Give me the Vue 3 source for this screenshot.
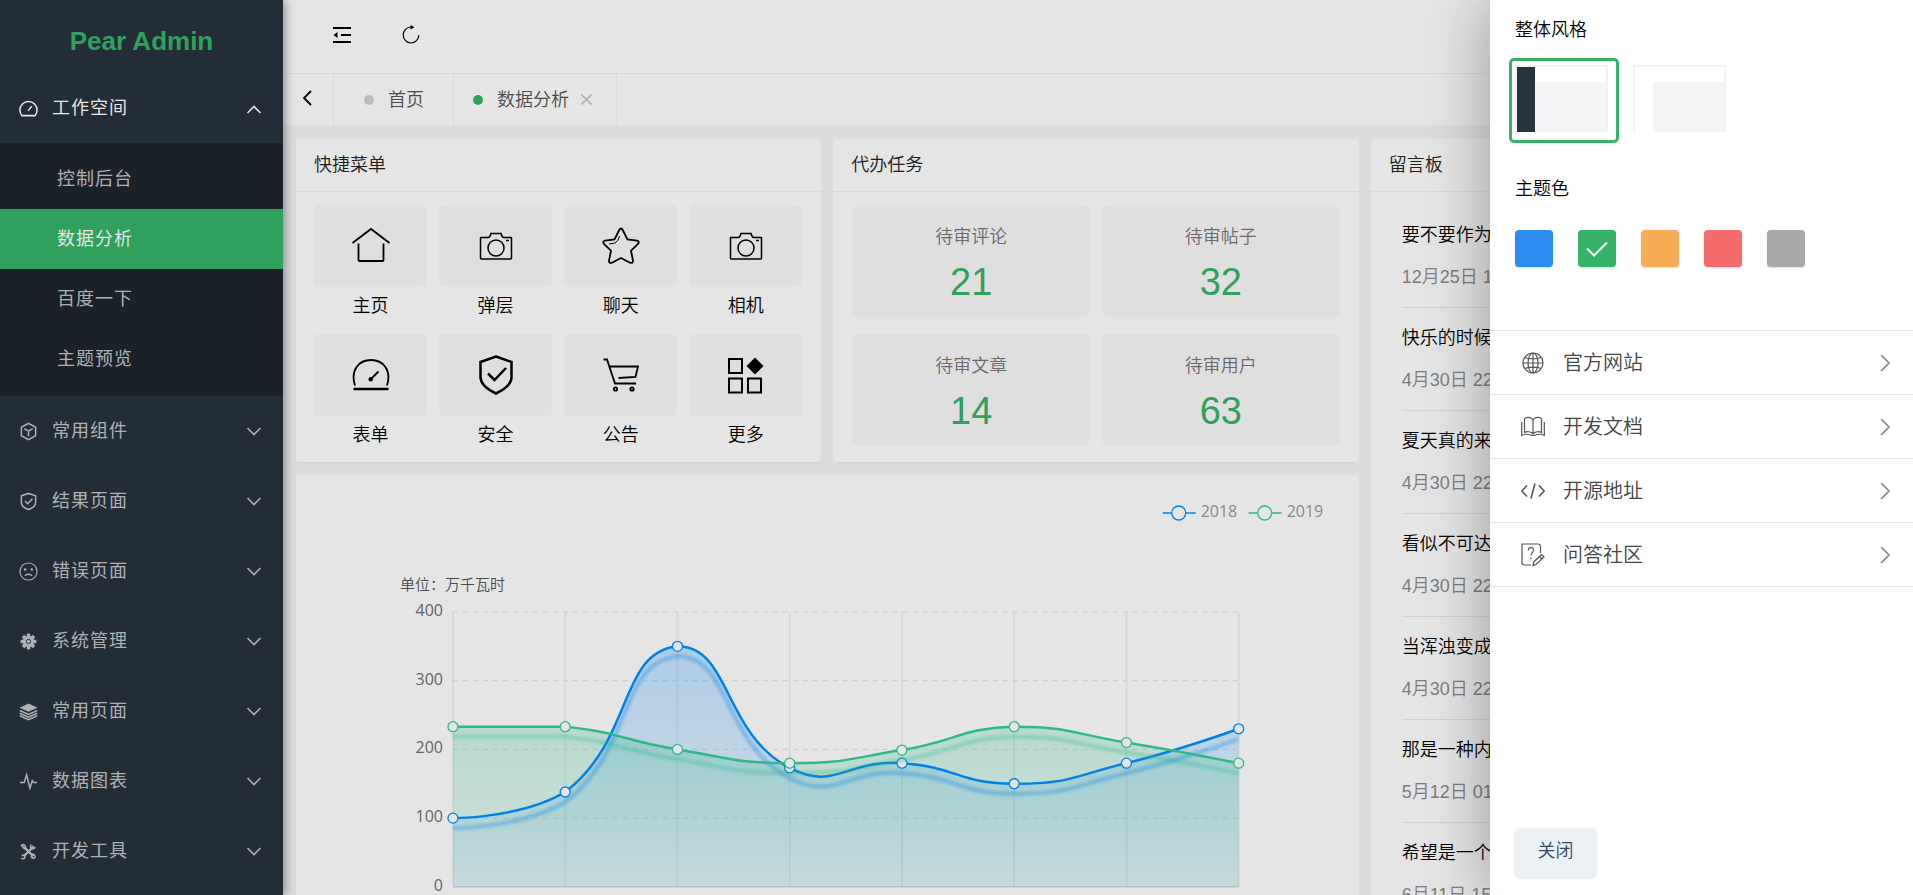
<script setup>
import { ref } from 'vue'

const subMenu = ['控制后台', '数据分析', '百度一下', '主题预览']
const activeSub = ref('数据分析')

const menus = [
  { name: '常用组件', icon: 'cube' },
  { name: '结果页面', icon: 'shield' },
  { name: '错误页面', icon: 'sad' },
  { name: '系统管理', icon: 'gear' },
  { name: '常用页面', icon: 'layers' },
  { name: '数据图表', icon: 'pulse' },
  { name: '开发工具', icon: 'tools' }
]

const quick = [
  { name: '主页', icon: 'home' },
  { name: '弹层', icon: 'camera' },
  { name: '聊天', icon: 'star' },
  { name: '相机', icon: 'camera' },
  { name: '表单', icon: 'gauge' },
  { name: '安全', icon: 'safe' },
  { name: '公告', icon: 'cart' },
  { name: '更多', icon: 'apps' }
]

const todos = [
  { name: '待审评论', value: 21 },
  { name: '待审帖子', value: 32 },
  { name: '待审文章', value: 14 },
  { name: '待审用户', value: 63 }
]

const messages = [
  { text: '要不要作为', date: '12月25日 1' },
  { text: '快乐的时候', date: '4月30日 22' },
  { text: '夏天真的来', date: '4月30日 22' },
  { text: '看似不可达', date: '4月30日 22' },
  { text: '当浑浊变成', date: '4月30日 22' },
  { text: '那是一种内', date: '5月12日 01' },
  { text: '希望是一个', date: '6月11日 15' }
]

const themes = ['blue', 'green', 'orange', 'red', 'gray']
const theme = ref('green')

const links = [
  { name: '官方网站', icon: 'globe' },
  { name: '开发文档', icon: 'book' },
  { name: '开源地址', icon: 'code' },
  { name: '问答社区', icon: 'question' }
]

/* Chart geometry */
const left = 157
const right = 943
const top = 137
const bottom = 412
const ticks = [400, 300, 200, 100, 0]
const yOf = v => bottom - (v / 400) * (bottom - top)
const xOf = i => left + (i * (right - left)) / 7

function build(values) {
  const pts = values.map((v, i) => [xOf(i), yOf(v)])
  const ys = pts.map(p => p[1])
  const lo = Math.min(...ys)
  const hi = Math.max(...ys)
  const clamp = p => [Math.min(right, Math.max(left, p[0])), Math.min(hi, Math.max(lo, p[1]))]
  const dist = (a, b) => Math.hypot(a[0] - b[0], a[1] - b[1])
  let d = `M${pts[0]}`
  let c0 = pts[0]
  for (let i = 1; i < pts.length; i++) {
    const p = pts[i]
    const prev = pts[i - 1]
    const next = pts[i + 1] || p
    const v = [next[0] - prev[0], next[1] - prev[1]]
    const a = dist(p, prev)
    const b = dist(p, next)
    const r = b / (a + b)
    const k = next === p ? 0 : 0.5
    const c1 = [p[0] - v[0] * k * (1 - r), p[1] - v[1] * k * (1 - r)]
    d += `C${clamp(c0)} ${clamp(c1)} ${p}`
    c0 = [p[0] + v[0] * k * r, p[1] + v[1] * k * r]
  }
  return { pts, line: d, area: `${d}L${right},${bottom}L${left},${bottom}Z` }
}

const series = [
  { id: 'blue', year: '2018', x: 867, ...build([100, 138, 350, 173, 180, 150, 180, 230]) },
  { id: 'green', year: '2019', x: 953, ...build([233, 233, 200, 180, 199, 233, 210, 180]) }
]

const gearTeeth = [0, 45, 90, 135, 180, 225, 270, 315]
</script>

<template>
  <div class="app">
    <aside class="side">
      <h1 class="brand">Pear Admin</h1>
      <nav>
        <button class="item open" type="button">
          <svg class="ico" viewBox="0 0 20 20"><path d="M3 17.500h14c1.300-1.600 2-3.600 2-5.800a9 9 0 0 0-18 0c0 2.200.7 4.200 2 5.800zM9.500 12.500l4-5" /></svg>
          <span>工作空间</span>
          <svg class="chev" viewBox="0 0 16 16"><path d="M1.500 13 8 6.500l6.500 6.500" /></svg>
        </button>
        <div class="sub">
          <a v-for="s in subMenu" :key="s" href="#" :class="{ on: s === activeSub }" @click.prevent="activeSub = s">{{ s }}</a>
        </div>
        <button v-for="m in menus" :key="m.name" class="item" type="button">
          <svg class="ico" viewBox="0 0 20 20">
            <path v-if="m.icon === 'cube'" d="M10 1.500 17.500 5.500v9L10 18.500 2.500 14.500v-9zM5.500 7 10 9.700 14.500 7M10 9.700V15" />
            <path v-else-if="m.icon === 'shield'" d="M10 1.500 17.500 4v7c0 3.500-4 6.200-7.500 7.500C6.500 17.200 2.500 14.500 2.500 11V4zM6.300 9.500l2.900 2.800 5-5.300" />
            <g v-else-if="m.icon === 'sad'">
              <circle class="ring" cx="10" cy="10" r="9" />
              <path d="M6.300 14.500c1.500-2 5.900-2 7.400 0" />
              <circle class="solid" cx="6.500" cy="8" r="1.300" />
              <circle class="solid" cx="13.500" cy="8" r="1.300" />
            </g>
            <g v-else-if="m.icon === 'gear'">
              <rect v-for="t in gearTeeth" :key="t" class="fill" x="8.200" y="1.700" width="3.600" height="5" :transform="`rotate(${t} 10 10)`" />
              <circle class="fill" cx="10" cy="10" r="6" />
              <circle class="hole" cx="10" cy="10" r="2.300" />
            </g>
            <g v-else-if="m.icon === 'layers'">
              <path class="fill" d="M10 1.500 19.500 6 10 10.300.5 6z" />
              <path d="M.8 9 10 13.100 19.200 9M.8 11.800 10 15.900l9.200-4.100M.8 14.500 10 18.500l9.200-4" />
            </g>
            <path v-else-if="m.icon === 'pulse'" d="M1 11h4.500L8 3l3.500 14L14 9l1.500 2H19" />
            <g v-else>
              <path class="thick" d="m6 6 9 9M15.500 4.500 5 15" />
              <path d="M2.800 3.500 5 2.800l2 2.200-1.500 2zM13 2.800c-1.500 1.500-1 4 .5 4.500 1.500.5 3-.5 3.500-2M3 14.500c1.500-1.500 4 0 3 2.300-1 1.200-3 .7-3.500 0M13.500 13c2-1 4.500 2 3 3.500s-4 0-3.500-2" />
            </g>
          </svg>
          <span>{{ m.name }}</span>
          <svg class="chev" viewBox="0 0 16 16"><path d="M1.500 5 8 11.500 14.500 5" /></svg>
        </button>
      </nav>
    </aside>

    <div class="body">
      <header class="head">
        <button type="button" aria-label="收起菜单">
          <svg viewBox="0 0 20 20"><path class="bar" d="M1 3h18M9 10h10M1 17h18" /><path class="solid" d="M1.500 10 5.500 7v6z" /></svg>
        </button>
        <button type="button" aria-label="刷新">
          <svg viewBox="0 0 20 20"><path class="thin" d="M17.800 10a7.800 8 0 1 1-7.800-8h1" /><path class="solid" d="M9.500 0 13.500 2.300 9.500 4.500z" /></svg>
        </button>
      </header>
      <div class="tabs">
        <button class="prev" type="button" aria-label="向左">
          <svg viewBox="0 0 16 16"><path d="M12 1 5 8l7 7" /></svg>
        </button>
        <a class="tab first" href="#"><i class="dot"></i>首页</a>
        <a class="tab" href="#"><i class="dot on"></i>数据分析
          <svg viewBox="0 0 14 14"><path d="m1.500 1.500 11 11m0-11-11 11" /></svg>
        </a>
      </div>

      <main class="grid">
        <section class="card">
          <h2>快捷菜单</h2>
          <div class="quick">
            <a v-for="(q, i) in quick" :key="i" href="#">
              <span class="tile">
                <svg viewBox="0 0 40 40">
                  <path v-if="q.icon === 'home'" d="M1.500 17 20 3l18.500 14M7.500 17.500V34q0 1 1 1h23q1 0 1-1V17.500" />
                  <g v-else-if="q.icon === 'camera'" class="fine">
                    <path d="M5 11.500h7q2 0 3-4h10q1 4 3 4h7q.5 0 .5.500v20q0 1-1 1h-29q-1 0-1-1v-20q0-.500.500-.500zM30 14.500h3" />
                    <circle cx="20" cy="22" r="8" />
                  </g>
                  <g v-else-if="q.icon === 'star'">
                    <path d="M18 4.500q2-4 4 0l4.500 9 9.500 1.200q3 .8 1 3.300l-7 6.700 2 10q0 3-3 2L20 32l-9 4.700q-3 1-3-2l2-10L3 18q-2-2.500 1-3.300l9.500-1.200z" />
                    <path class="hair" d="M18.500 10q-1.500 6-4.500 7l-6 1" />
                  </g>
                  <g v-else-if="q.icon === 'gauge'">
                    <path d="M4 30.500C-1 15 8 5 20 5s21 10 16 25.500M20 24l7.500-7.500" />
                    <path class="bold" d="M2.500 34h35" />
                    <circle class="solid" cx="19.700" cy="24.300" r="2.200" />
                  </g>
                  <g v-else-if="q.icon === 'safe'" class="bold">
                    <path d="M20 1.500 35.500 7v15c0 8-8 13-15.500 16.500C12.500 35 4.500 30 4.500 22V7z" />
                    <path d="m12 18.500 6.500 6.500L30 13" />
                  </g>
                  <g v-else-if="q.icon === 'cart'">
                    <path d="M2.500 4.500h3.500l8 24h21M8 11.500h29L34.500 22l-17 1" />
                    <circle cx="14.500" cy="34" r="1.700" />
                    <circle cx="31" cy="34" r="1.700" />
                  </g>
                  <g v-else>
                    <path class="square" d="M3 4h13v14H3zM3 23.500h13v14H3zM22 23.500h13v14H22z" />
                    <path class="solid" d="m29 2.500 8.500 8.500L29 19.500 20.500 11z" />
                  </g>
                </svg>
              </span>
              <span class="label">{{ q.name }}</span>
            </a>
          </div>
        </section>

        <section class="card">
          <h2>代办任务</h2>
          <div class="todo">
            <a v-for="t in todos" :key="t.name" href="#">
              <span>{{ t.name }}</span>
              <strong>{{ t.value }}</strong>
            </a>
          </div>
        </section>

        <section class="card board">
          <h2>留言板</h2>
          <ul>
            <li v-for="(m, i) in messages" :key="i">
              <p>{{ m.text }}</p>
              <time>{{ m.date }}</time>
            </li>
          </ul>
        </section>

        <section class="card chart">
          <svg viewBox="0 0 1063 440" role="img" aria-label="单位：万千瓦时">
            <defs>
              <linearGradient id="fill-blue" x1="0" y1="0" x2="0" y2="1">
                <stop offset="0" stop-color="#0090ff" stop-opacity=".24" />
                <stop offset="1" stop-color="#0090ff" stop-opacity=".07" />
              </linearGradient>
              <linearGradient id="fill-green" x1="0" y1="0" x2="0" y2="1">
                <stop offset="0" stop-color="#34ce9a" stop-opacity=".25" />
                <stop offset="1" stop-color="#34ce9a" stop-opacity=".09" />
              </linearGradient>
              <filter id="glow" x="-5%" y="-30%" width="110%" height="170%">
                <feGaussianBlur stdDeviation="1.500" />
              </filter>
            </defs>
            <line v-for="i in 8" :key="'v' + i" class="vline" :x1="xOf(i - 1)" :x2="xOf(i - 1)" :y1="top" :y2="bottom" />
            <line v-for="t in ticks" :key="'h' + t" :class="t ? 'hline' : 'axis'" :x1="left" :x2="right" :y1="yOf(t)" :y2="yOf(t)" />
            <text v-for="t in ticks" :key="'t' + t" class="tick" :x="left - 10" :y="yOf(t) + 4">{{ t }}</text>
            <text class="unit" x="104" y="115">单位：万千瓦时</text>

            <path v-for="s in series" :key="'a' + s.id" class="area" :d="s.area" :fill="`url(#fill-${s.id})`" />
            <g v-for="s in series" :key="s.id" :class="s.id">
              <g transform="translate(0 10)"><path class="glow" :d="s.line" filter="url(#glow)" /></g>
              <path class="line" :d="s.line" />
              <circle v-for="(p, i) in s.pts" :key="i" :cx="p[0]" :cy="p[1]" r="5" />
              <path class="key" :d="`M${s.x} 38h33`" />
              <circle :cx="s.x + 16" cy="38" r="7" />
              <text class="year" :x="s.x + 38" y="42">{{ s.year }}</text>
            </g>
          </svg>
        </section>
      </main>
    </div>

    <div class="shade"></div>

    <aside class="drawer">
      <h3>整体风格</h3>
      <div class="styles">
        <button class="style on" type="button" aria-label="深色"><span class="thumb dark"><i></i><b></b></span></button>
        <button class="style" type="button" aria-label="浅色"><span class="thumb"><i></i><b></b></span></button>
      </div>
      <h3>主题色</h3>
      <div class="colors">
        <button v-for="c in themes" :key="c" type="button" :class="c" :aria-label="c" @click="theme = c">
          <svg v-if="c === theme" viewBox="0 0 24 24"><path d="m2 11.500 7 7L22 5.500" /></svg>
        </button>
      </div>
      <nav class="links">
        <a v-for="l in links" :key="l.name" href="#">
          <svg class="pic" viewBox="0 0 24 24">
            <g v-if="l.icon === 'globe'">
              <circle cx="12" cy="12" r="10" />
              <ellipse cx="12" cy="12" rx="5" ry="10" />
              <path d="M12 2v20M2 12h20M4 6.500c4 1.800 12 1.800 16 0M4 17.500c4-1.800 12-1.800 16 0" />
            </g>
            <path v-else-if="l.icon === 'book'" d="M12 5C10.500 2 5 1.500 3.500 4v13.500c2-1.500 7-1 8.500 1.500 1.500-2.500 6.500-3 8.500-1.500V4C19 1.500 13.500 2 12 5zM12 5v14M.7 7v13.500c3-1.500 7-1.500 9.800 0h3c2.700-1.500 6.700-1.500 9.800 0V7" />
            <path v-else-if="l.icon === 'code'" class="strong" d="M6 6.500.8 12 6 17.500M18 6.500l5.200 5.500-5.200 5.500M14 4.500 10 19.500" />
            <g v-else>
              <path d="M10 22H3.500Q1 22 1 19.500V1h16q2.500 0 2.500 2.500V10M7.300 7.500C7.500 3.500 13 4 12.500 7.500c-.300 2-2.500 2-2.500 5M10 14.500v1.700" />
              <path d="m12 22.500 1-4 7.500-7 2.500 2.500-8 7.500zM18.500 13.500 21 16M15 17l2-2" />
            </g>
          </svg>
          <span>{{ l.name }}</span>
          <svg class="go" viewBox="0 0 16 16"><path d="m4 0 8 8-8 8" /></svg>
        </a>
      </nav>
      <button class="close" type="button">关闭</button>
    </aside>
  </div>
</template>

<style>
body { overflow: hidden; }
</style>

<style scoped>
.app {
  position: relative;
  display: flex;
  height: 100vh;
  overflow: hidden;
  background: #f5f5f5;
  font-family: "Liberation Sans", "Noto Sans CJK SC", sans-serif;
  font-size: 18px;
  font-weight: 350;
  line-height: 24px;
  color: #000;
}
* { box-sizing: border-box; }
h1, h2, h3, p, ul { margin: 0; padding: 0; font-size: inherit; font-weight: inherit; }
ul { list-style: none; }
a { color: inherit; text-decoration: none; }
button { border: 0; padding: 0; background: none; font: inherit; color: inherit; cursor: pointer; }
svg { display: block; fill: none; stroke: currentColor; }
svg .solid { fill: currentColor; stroke: none; }

.side {
  position: relative;
  z-index: 1;
  flex: 0 0 283px;
  background: #28333e;
  color: #c2c5c8;
  box-shadow: 3px 0 8px rgba(0, 21, 41, .35);
}
.brand { height: 73px; padding-top: 10px; font-size: 26px; font-weight: 700; line-height: 62px; text-align: center; color: #36b368; }
.item { display: flex; align-items: center; gap: 14px; width: 100%; height: 70px; padding: 0 21px 0 19px; letter-spacing: 1px; text-align: left; font-weight: 400; }
.item span { flex: 1; }
.item.open { color: #fff; }
.ico { width: 19px; height: 19px; stroke-width: 1.6; }
.ico .ring { stroke-width: 1.200; }
.ico .fill { fill: currentColor; stroke: none; }
.ico .hole { stroke: #28333e; stroke-width: 1; }
.ico .thick { stroke-width: 2.500; }
.chev { width: 16px; height: 16px; stroke-width: 1.6; }
.sub { padding: 6px 0 7px; background: #1e252d; }
.sub a { display: block; height: 60px; padding-left: 57px; line-height: 60px; letter-spacing: 1px; font-weight: 400; }
.sub .on { background: #36b368; color: #fff; }

.body { flex: 1; min-width: 0; }
.head { display: flex; align-items: center; gap: 49px; height: 74px; padding: 0 0 4px 49px; background: #fff; border-bottom: 1px solid #f3f3f3; }
.head svg { width: 20px; height: 20px; }
.head .bar { stroke-width: 2; }
.head .thin { stroke-width: 1.200; }
.tabs { display: flex; height: 51px; background: #fff; color: #555; }
.prev { display: flex; align-items: center; width: 51px; padding: 0 0 4px 16px; border-right: 1px solid #f3f3f3; color: #000; }
.prev svg { width: 16px; height: 16px; stroke-width: 1.8; }
.tab { display: flex; align-items: center; padding: 0 23px 0 19px; border-right: 1px solid #f3f3f3; }
.tab.first { padding: 0 29px 0 30px; }
.tab svg { width: 13px; height: 13px; margin-left: 11px; color: #bbb; stroke-width: 1.5; }
.dot { width: 10px; height: 10px; margin-right: 14px; border-radius: 50%; background: #d2d2d2; }
.dot.on { background: #36b368; }

.grid { display: grid; grid-template-columns: repeat(3, 1fr); grid-template-rows: 323px auto; gap: 13px 12px; padding: 14px 17px 0 13px; }
.card { background: #fff; border-radius: 3px; box-shadow: 0 1px 2px rgba(0, 0, 0, .06); }
.card h2 { height: 53px; padding-left: 18px; line-height: 52px; border-bottom: 1px solid #f3f3f3; color: #222; }
.quick { display: grid; grid-template-columns: repeat(4, 1fr); gap: 0 12px; padding: 13px 19px 0 18px; }
.quick a { height: 129px; text-align: center; }
.tile { display: flex; align-items: center; justify-content: center; height: 82px; background: #f9f9f9; border-radius: 5px; }
.tile svg { width: 40px; height: 40px; stroke-width: 1.8; }
.tile .fine { stroke-width: 1.5; }
.tile .hair { stroke-width: 1; }
.tile .bold { stroke-width: 2.500; }
.tile .square { stroke-width: 2; }
.label { display: block; line-height: 38px; }
.todo { display: grid; grid-template-columns: 1fr 1fr; gap: 17px 12px; padding: 13px 19px 0; }
.todo a { display: flex; flex-direction: column; gap: 10px; height: 112px; padding-top: 20px; background: #f9f9f9; border-radius: 6px; text-align: center; color: #777; }
.todo strong { font-size: 38px; font-weight: 400; line-height: 46px; color: #36b368; }
.board { grid-row: span 2; }
.board ul { padding: 13px 31px 0; }
.board li { height: 103px; padding-top: 18px; border-bottom: 1px solid #eaeaea; white-space: nowrap; }
.board time { display: block; margin-top: 18px; color: #8c8c8c; }

.chart { grid-column: span 2; font-family: "Open Sans", "Noto Sans CJK SC", sans-serif; font-size: 16px; font-weight: 400; }
.chart svg { width: 100%; }
.chart text { stroke: none; fill: #6e7079; }
.chart .unit { fill: #555; font-size: 15px; font-weight: 350; }
.chart .tick { text-anchor: end; }
.chart .year { fill: #999; }
.area { stroke: none; }
.vline { stroke: #f1f1f1; stroke-width: 2; }
.hline { stroke: #e2e2e2; stroke-dasharray: 5 5; }
.axis { stroke: #ccc; }
.blue { color: #0090ff; }
.green { color: #34ce9a; }
.line { stroke-width: 2.500; }
.glow { stroke-width: 4; opacity: .35; }
.key { stroke-width: 1.500; }
.chart circle { fill: #fff; stroke-width: 1.300; }

.shade { position: absolute; inset: 0; z-index: 2; background: rgba(0, 0, 0, .1); }

.drawer {
  position: absolute;
  top: 0;
  right: 0;
  bottom: 0;
  z-index: 3;
  display: flex;
  flex-direction: column;
  width: 423px;
  padding-top: 15px;
  background: #fff;
  box-shadow: 1px 1px 60px rgba(0, 0, 0, .35);
}
.drawer h3 { padding-left: 25px; line-height: 30px; }
.styles { display: flex; gap: 8px; padding: 13px 19px 31px; }
.style { display: flex; width: 110px; height: 85px; padding: 4px 3px; border: 3px solid transparent; border-radius: 5px; }
.style.on { border-color: #36b368; }
.thumb { display: grid; grid-template: 15px 1fr / 18px 1fr; width: 93px; height: 67px; border: 2px solid #f2f2f2; border-bottom: 0; }
.thumb i { grid-row: span 2; }
.thumb.dark i { background: #28333e; }
.thumb b { grid-row: 2; grid-column: 2; background: #f3f5f7; }
.colors { display: flex; gap: 25px; padding: 26px 25px 63px; }
.colors button { display: flex; align-items: center; justify-content: center; width: 38px; height: 37px; border-radius: 4px; background: #a9a9a9; box-shadow: 0 1px 2px rgba(0, 0, 0, .15); }
.colors svg { width: 24px; height: 24px; color: #fff; stroke-width: 2; }
.colors .blue { background: #2d8cf0; }
.colors .green { background: #36b368; }
.colors .orange { background: #f6ad55; }
.colors .red { background: #f56c6c; }
.links { border-top: 1px solid #e6e6e6; color: #444; font-size: 20px; }
.links a { display: flex; align-items: center; height: 64px; padding: 0 20px 0 31px; border-bottom: 1px solid #e6e6e6; }
.links span { flex: 1; margin-left: 18px; }
.pic { width: 24px; height: 24px; color: #555; stroke-width: 1.200; }
.pic .strong { stroke-width: 1.600; }
.go { width: 16px; height: 16px; color: #888; stroke-width: 1.700; }
.close { width: 81px; height: 49px; margin: auto 0 18px 25px; padding-bottom: 3px; border-radius: 5px; background: #ecf1f6; color: #34495e; box-shadow: 0 1px 3px rgba(0, 0, 0, .15); }
</style>
